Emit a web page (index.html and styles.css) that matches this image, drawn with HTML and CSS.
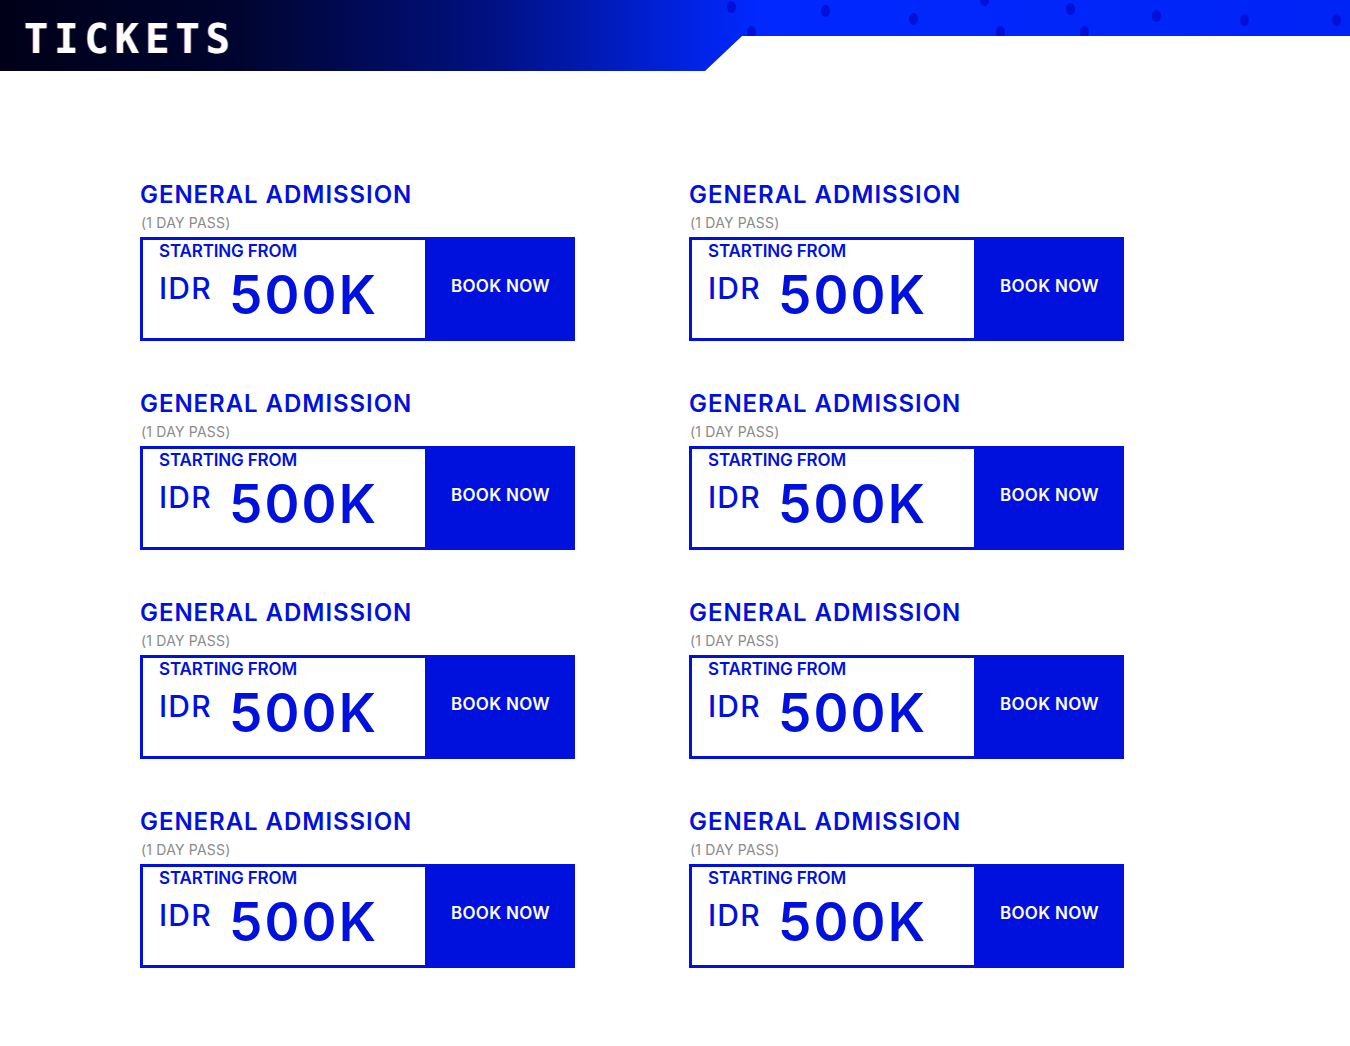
FILE: index.html
```html
<!DOCTYPE html>
<html lang="en">
<head>
<meta charset="utf-8">
<title>Tickets</title>
<link rel="stylesheet" href="styles.css">
</head>
<body>
<header class="banner">
  <div class="banner-bg">
    <span class="dot d1"></span><span class="dot d2"></span><span class="dot d3"></span>
    <span class="dot d4"></span><span class="dot d5"></span><span class="dot d6"></span>
    <span class="dot d7"></span><span class="dot d8"></span><span class="dot d9"></span>
    <span class="dot d10"></span><span class="dot d11"></span>
  </div>
  <h1 class="banner-title">TICKETS</h1>
</header>

<main class="tickets">
  <section class="ticket">
    <h2 class="ticket-name">GENERAL ADMISSION</h2>
    <p class="ticket-sub">(1 DAY PASS)</p>
    <div class="ticket-box">
      <div class="price">
        <div class="price-label">STARTING FROM</div>
        <div class="price-row"><span class="cur">IDR</span><span class="amount">500K</span></div>
      </div>
      <a class="book" href="#">BOOK NOW</a>
    </div>
  </section>
  <section class="ticket">
    <h2 class="ticket-name">GENERAL ADMISSION</h2>
    <p class="ticket-sub">(1 DAY PASS)</p>
    <div class="ticket-box">
      <div class="price">
        <div class="price-label">STARTING FROM</div>
        <div class="price-row"><span class="cur">IDR</span><span class="amount">500K</span></div>
      </div>
      <a class="book" href="#">BOOK NOW</a>
    </div>
  </section>
  <section class="ticket">
    <h2 class="ticket-name">GENERAL ADMISSION</h2>
    <p class="ticket-sub">(1 DAY PASS)</p>
    <div class="ticket-box">
      <div class="price">
        <div class="price-label">STARTING FROM</div>
        <div class="price-row"><span class="cur">IDR</span><span class="amount">500K</span></div>
      </div>
      <a class="book" href="#">BOOK NOW</a>
    </div>
  </section>
  <section class="ticket">
    <h2 class="ticket-name">GENERAL ADMISSION</h2>
    <p class="ticket-sub">(1 DAY PASS)</p>
    <div class="ticket-box">
      <div class="price">
        <div class="price-label">STARTING FROM</div>
        <div class="price-row"><span class="cur">IDR</span><span class="amount">500K</span></div>
      </div>
      <a class="book" href="#">BOOK NOW</a>
    </div>
  </section>
  <section class="ticket">
    <h2 class="ticket-name">GENERAL ADMISSION</h2>
    <p class="ticket-sub">(1 DAY PASS)</p>
    <div class="ticket-box">
      <div class="price">
        <div class="price-label">STARTING FROM</div>
        <div class="price-row"><span class="cur">IDR</span><span class="amount">500K</span></div>
      </div>
      <a class="book" href="#">BOOK NOW</a>
    </div>
  </section>
  <section class="ticket">
    <h2 class="ticket-name">GENERAL ADMISSION</h2>
    <p class="ticket-sub">(1 DAY PASS)</p>
    <div class="ticket-box">
      <div class="price">
        <div class="price-label">STARTING FROM</div>
        <div class="price-row"><span class="cur">IDR</span><span class="amount">500K</span></div>
      </div>
      <a class="book" href="#">BOOK NOW</a>
    </div>
  </section>
  <section class="ticket">
    <h2 class="ticket-name">GENERAL ADMISSION</h2>
    <p class="ticket-sub">(1 DAY PASS)</p>
    <div class="ticket-box">
      <div class="price">
        <div class="price-label">STARTING FROM</div>
        <div class="price-row"><span class="cur">IDR</span><span class="amount">500K</span></div>
      </div>
      <a class="book" href="#">BOOK NOW</a>
    </div>
  </section>
  <section class="ticket">
    <h2 class="ticket-name">GENERAL ADMISSION</h2>
    <p class="ticket-sub">(1 DAY PASS)</p>
    <div class="ticket-box">
      <div class="price">
        <div class="price-label">STARTING FROM</div>
        <div class="price-row"><span class="cur">IDR</span><span class="amount">500K</span></div>
      </div>
      <a class="book" href="#">BOOK NOW</a>
    </div>
  </section>
</main>
</body>
</html>
```

FILE: styles.css
```css
* { box-sizing: border-box; }

html, body {
  margin: 0;
  padding: 0;
  background: #ffffff;
  font-family: "Inter", "Noto Sans", sans-serif;
}

.banner {
  position: relative;
  height: 71px;
}

.banner-bg {
  position: absolute;
  inset: 0;
  background: linear-gradient(90deg, #000018 0%, #000530 18%, #001080 36%, #0022dd 50%, #0028ff 56%, #0024f6 100%);
  clip-path: polygon(0 0, 100% 0, 100% 36px, 742px 36px, 705px 71px, 0 71px);
  overflow: hidden;
}

.dot {
  position: absolute;
  width: 9px;
  height: 12px;
  border-radius: 50%;
  background: #0010d8;
}
.d1 { left: 727px; top: 1px; }
.d2 { left: 747px; top: 26px; }
.d3 { left: 821px; top: 5px; }
.d4 { left: 909px; top: 13px; }
.d5 { left: 980px; top: -6px; }
.d6 { left: 996px; top: 26px; }
.d7 { left: 1066px; top: 3px; }
.d8 { left: 1152px; top: 10px; }
.d9 { left: 1240px; top: 14px; }
.d10 { left: 1332px; top: 14px; }
.d11 { left: 1080px; top: 26px; }

.banner-title {
  position: relative;
  margin: 0;
  padding: 17px 0 0 24px;
  font-family: "DejaVu Sans Mono", monospace;
  font-weight: bold;
  font-size: 40px;
  line-height: 44px;
  letter-spacing: 6.2px;
  color: #ffffff;
  text-shadow: -1px 0 rgba(255, 80, 0, 0.55), 1px 0 rgba(0, 160, 255, 0.55);
}

.tickets {
  display: grid;
  grid-template-columns: 435px 435px;
  column-gap: 114px;
  row-gap: 48px;
  padding: 109px 0 0 140px;
}

.ticket-name {
  margin: 0;
  font-size: 24px;
  line-height: 29px;
  font-weight: 600;
  color: #0011dd;
  letter-spacing: 0.95px;
}

.ticket-sub {
  margin: 5px 0 5px 1px;
  font-size: 14px;
  line-height: 18px;
  font-weight: 400;
  color: #8a8a8a;
  letter-spacing: 0.2px;
}

.ticket-box {
  display: flex;
  height: 104px;
  border: 3px solid #0011dd;
}

.price {
  flex: 1;
  padding: 1px 0 0 16px;
  color: #0011dd;
}

.price-label {
  font-size: 17px;
  line-height: 20px;
  font-weight: 600;
  letter-spacing: -0.15px;
}

.price-row {
  display: flex;
  align-items: flex-start;
  gap: 17px;
  margin-top: 4px;
}

.cur {
  font-size: 30px;
  line-height: 30px;
  font-weight: 500;
  padding-top: 8px;
  letter-spacing: 1.2px;
}

.amount {
  font-size: 53px;
  line-height: 60px;
  font-weight: 600;
  letter-spacing: 2.2px;
}

.book {
  width: 147px;
  background: #0011dd;
  color: #ffffff;
  text-decoration: none;
  display: flex;
  align-items: center;
  justify-content: center;
  font-size: 17px;
  font-weight: 600;
  letter-spacing: 0.3px;
  padding: 0 0 6px 4px;
}
```
